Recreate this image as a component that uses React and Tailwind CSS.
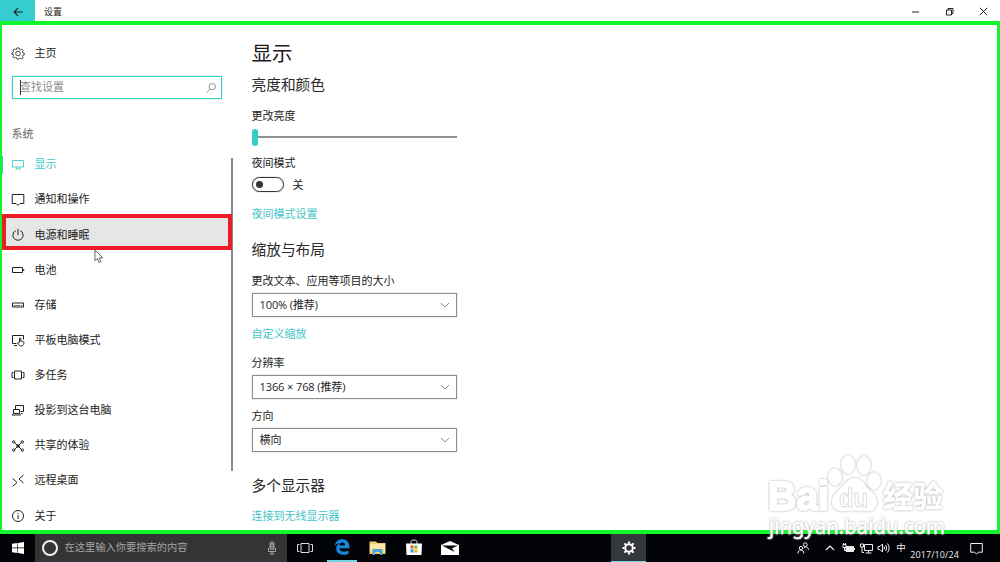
import React from "react";

const Icon = ({ children, className = "w-[14px] h-[14px]", box = "0 0 14 14", w = 1 }) => (
  <svg viewBox={box} className={className} fill="none" stroke="currentColor" strokeWidth={w}>
    {children}
  </svg>
);

const gear =
  "M5.9 1h2.2l.4 1.6 1.1.5 1.5-.9 1.5 1.5-.9 1.5.5 1.1 1.5.3v1.9l-1.5.4-.5 1.1.9 1.5-1.5 1.5-1.5-.9-1.1.5L8.1 13H5.9l-.4-1.4-1.1-.5-1.5.9-1.5-1.5.9-1.5-.5-1.1L.5 8.1V6.4l1.3-.3.5-1.1-.9-1.5 1.5-1.5 1.5.9 1.1-.5z";

const icons = {
  display: (
    <Icon>
      <path d="M1.5 2.5h11v6.5h-11zM5.5 9v2M8.5 9v2M4.5 11h5" strokeWidth=".9" />
    </Icon>
  ),
  notify: (
    <Icon>
      <path d="M1.2 1.5h11.6v9H9l-2 2-2-2H1.2z" />
    </Icon>
  ),
  power: (
    <Icon>
      <path d="M4.7 2.6a5.1 5.1 0 1 0 4.6 0M7 1v6" />
    </Icon>
  ),
  battery: (
    <Icon>
      <path d="M1.5 4.5h10v5h-10zM12.7 6v2" />
    </Icon>
  ),
  storage: (
    <Icon>
      <path d="M1.5 5h11v4h-11z" />
      <path d="M2.5 7.6h6.5M10 7.6h1.5" strokeWidth=".7" />
    </Icon>
  ),
  tablet: (
    <Icon>
      <path d="M5.5 10.5h-4v-8h11v4M3 12.5h3" />
      <path d="M8.5 9.5V5.6c0-1 1.3-1 1.3 0V8l2.4.6c.8.3.8 1 .6 2-.3 1.5-1 2.4-2.5 2.4-1.7 0-2.5-.8-3.8-3 .5-.8 1.3-.6 2-.5z" />
    </Icon>
  ),
  tasks: (
    <Icon>
      <path d="M3.5 3h7v8h-7zM2.5 4.5h-1.5v5h1.5M11.5 4.5H13v5h-1.5" />
    </Icon>
  ),
  project: (
    <Icon>
      <path d="M4.5 6.5v-4h8v6H9.5M2.5 6.5h6v4h-6zM1 12h8.5l-1-1.5M1 12l1.5-1.5M10 10.5h1.5" />
    </Icon>
  ),
  share: (
    <Icon>
      <path d="M3.5 3.5l7 7M10.5 3.5l-7 7" />
      <circle cx="2.7" cy="2.9" r="1.2" />
      <circle cx="11.3" cy="2.9" r="1.2" />
      <circle cx="2.7" cy="11.1" r="1.2" />
      <circle cx="11.3" cy="11.1" r="1.2" />
      <circle cx="7" cy="7" r="1.2" fill="currentColor" />
    </Icon>
  ),
  remote: (
    <Icon>
      <path d="M1.5 4.5l4.5 4-4.5 4M12.5 1L8 5l4.5 4" />
    </Icon>
  ),
  about: (
    <Icon>
      <circle cx="7" cy="7" r="5.5" />
      <path d="M7 6v4M7 4v1" />
    </Icon>
  ),
};

const items = [
  ["display", "显示"],
  ["notify", "通知和操作"],
  ["power", "电源和睡眠"],
  ["battery", "电池"],
  ["storage", "存储"],
  ["tablet", "平板电脑模式"],
  ["tasks", "多任务"],
  ["project", "投影到这台电脑"],
  ["share", "共享的体验"],
  ["remote", "远程桌面"],
  ["about", "关于"],
];

function NavItem({ id, label }) {
  const active = id === "display";
  const hot = id === "power";
  return (
    <div className={`relative flex h-[35.13px] shrink-0 items-center pl-[8.5px] ${active ? "text-[#3fc9c9]" : "text-[#222]"}`}>
      {active && <div className="absolute left-0 top-[9px] h-[18px] w-px bg-[#3fc9c9]" />}
      {hot && <div className="absolute left-0 top-[-3px] h-[36px] w-[230px] border-[4px] border-[#ee1c24] bg-[#e6e6e6]" />}
      <div className="relative flex items-center gap-[10px]">
        {icons[id]}
        <span>{label}</span>
      </div>
    </div>
  );
}

function Select({ children }) {
  return (
    <div className="mt-1 flex h-6 w-[205px] items-center justify-between border border-[#8d8d8d] pl-[7px] pr-[6px] text-[11px] text-[#222] shadow-[0_0_1px_#aaa]">
      <span className="tracking-[-0.1px]">{children}</span>
      <Icon className="h-[10px] w-[10px] text-[#888]" box="0 0 10 10">
        <path d="M1 3l4 4 4-4" />
      </Icon>
    </div>
  );
}

const H2 = ({ children, className }) => (
  <h2 className={`flex h-5 items-center text-[14.7px] leading-5 text-[#2a2a2a] ${className}`}>{children}</h2>
);
const Label = ({ children, className }) => <div className={`h-4 leading-4 ${className}`}>{children}</div>;
const Link = ({ children, className }) => <div className={`h-4 leading-4 text-[#3fc4c8] ${className}`}>{children}</div>;

function TitleBar() {
  return (
    <header className="flex h-[21px] items-center text-[#222]">
      <div className="flex h-full w-[35px] items-center justify-center bg-[#35cdd0]">
        <Icon className="mt-[2px] h-[10px] w-[10px]" box="0 0 10 10" w={1.2}>
          <path d="M10 5H1.2M5 1.2L1.2 5 5 8.8" />
        </Icon>
      </div>
      <span className="ml-[9px] mt-[2px] text-[9px]">设置</span>
      <div className="ml-auto mr-[12px] mt-[2px] flex items-center gap-[25px]">
        <Icon className="h-[9px] w-[9px]" box="0 0 9 9"><path d="M1 5h7" /></Icon>
        <Icon className="h-[9px] w-[9px]" box="0 0 9 9"><path d="M1.5 3h5v5h-5zM3 3V1.5h5v5H6.5" /></Icon>
        <Icon className="h-[9px] w-[9px]" box="0 0 9 9"><path d="M.8 .8l7.4 7.4M8.2 .8L.8 8.2" /></Icon>
      </div>
    </header>
  );
}

function Sidebar() {
  return (
    <nav className="flex w-[231px] shrink-0">
      <div className="flex w-[229px] shrink-0 flex-col">
        <div className="mt-5 flex h-4 items-center gap-[10px] pl-[8.5px] text-[#222]">
          <Icon w={0.9} className="h-[13px] w-[14px]">
            <path d={gear} strokeLinejoin="round" />
            <circle cx="7" cy="7" r="2.5" />
          </Icon>
          <span>主页</span>
        </div>
        <div className="ml-[10px] mt-[15px] flex h-[23px] w-[210px] shrink-0 items-center border border-[#36d2c4] pl-[7px] pr-[4px] text-[#8c8c8c] shadow-[0_0_1px_#36d2c4]">
          <span className="-mr-px h-[15px] w-px bg-[#333]" />
          <span className="flex-1">查找设置</span>
          <Icon className="h-3 w-3" box="0 0 12 12" w={0.9}>
            <circle cx="7.3" cy="4.7" r="3.2" />
            <path d="M5 7L1.5 10.5" />
          </Icon>
        </div>
        <div className="mt-[27px] h-4 shrink-0 pl-[9.5px] leading-4 text-[#666]">系统</div>
        <div className="mt-[5px] flex shrink-0 flex-col">
          {items.map(([id, label]) => (
            <NavItem key={id} id={id} label={label} />
          ))}
        </div>
      </div>
      <div className="mt-[133px] h-[313px] w-[2px] bg-[#8a8a8a]" />
    </nav>
  );
}

function Content() {
  return (
    <main className="flex flex-1 flex-col pl-[18.5px] text-[#222]">
      <h1 className="mt-[14px] h-7 text-[20.5px] leading-7 text-[#1c1c1c]">显示</h1>
      <H2 className="mt-[7px]">亮度和颜色</H2>
      <Label className="mt-[14px]">更改亮度</Label>
      <div className="mt-1 flex h-[18px] w-[205px] items-center">
        <div className="h-[17px] w-[6px] rounded-full bg-[#35cdc8]" />
        <div className="h-[1.5px] flex-1 bg-[#909090]" />
      </div>
      <Label className="mt-[9px]">夜间模式</Label>
      <div className="mt-[6px] flex h-[15px] items-center gap-[9px]">
        <div className="flex h-[15px] w-[32px] items-center rounded-full border border-[#333] pl-[3px] shadow-[0_0_1px_#555]">
          <div className="h-[7px] w-[7px] rounded-full bg-[#333]" />
        </div>
        <span className="mt-px">关</span>
      </div>
      <Link className="mt-[14px]">夜间模式设置</Link>
      <H2 className="mt-[17px]">缩放与布局</H2>
      <Label className="mt-[14px]">更改文本、应用等项目的大小</Label>
      <Select>100% (推荐)</Select>
      <Link className="mt-[9px]">自定义缩放</Link>
      <Label className="mt-[13px]">分辨率</Label>
      <Select>1366 × 768 (推荐)</Select>
      <Label className="mt-[9px]">方向</Label>
      <Select>横向</Select>
      <H2 className="mt-[23px]">多个显示器</H2>
      <Link className="mt-[13px]">连接到无线显示器</Link>
    </main>
  );
}

function Taskbar() {
  return (
    <footer className="flex h-7 items-stretch bg-[#020408] text-white">
      <div className="flex w-[35px] items-center justify-center">
        <svg viewBox="0 0 12 12" className="h-3 w-3" fill="#fff">
          <path d="M0 1.7L5.2 1v4.6H0zM5.8.9L12 0v5.6H5.8zM0 6.2h5.2v4.7L0 10.2zM5.8 6.2H12V12l-6.2-.9z" />
        </svg>
      </div>
      <div className="flex w-[252px] items-center bg-[#333435] pl-[7px] pr-[10px]">
        <div className="h-[16px] w-[16px] rounded-full border-2 border-[#eee]" />
        <span className="ml-[6.5px] flex-1 text-[10.25px] text-[#a5a5a5]">在这里输入你要搜索的内容</span>
        <Icon className="h-[14px] w-[10px] text-[#aaa]" box="0 0 10 14">
          <rect x="3" y="1" width="4" height="7.5" rx="1.5" fill="#777" />
          <path d="M1.5 7v3.5h7V7M5 10.5V13M3 13h4" />
        </Icon>
      </div>
      <div className="flex w-[35px] items-center justify-center">
        <Icon className="h-3 w-4 text-[#ddd]" box="0 0 16 12">
          <path d="M4 1.5h8v9H4zM2.5 2.5h-2v7h2M13.5 2.5h2v7h-2" />
        </Icon>
      </div>
      <div className="ml-[5px] flex w-[30px] items-center justify-center border-b-2 border-[#70d5e5]">
        <svg viewBox="0 0 16 16" className="h-[16px] w-[16px]" fill="#1787e0">
          <path d="M.6 7.1C1.2 2.7 4.3.3 8.2.3c4.6 0 7.2 3.3 7.2 7.2v1.8H5.4c.2 2.5 2.4 3.5 4.9 3.5 1.7 0 3-.5 4.2-1.2v3.1c-1.3.7-3 1.1-5 1.1-4.3 0-7.3-2.4-7.3-6.2 0-2.6 1.5-4.5 3.8-5.6C3 4.4 1.6 5.4.6 7.1zM5.5 6.5h5.6c0-2-1-3-2.7-3-1.6 0-2.7 1.2-2.9 3z" />
        </svg>
      </div>
      <div className="flex w-[41px] items-center justify-center">
        <svg viewBox="0 0 17 14" className="h-[14px] w-[17px]">
          <path d="M.5.5H7L8.5 2h8v11H.5z" fill="#f2cd70" />
          <path d="M1 3h15v7H1z" fill="#fbe6a4" />
          <path d="M3.5 8h10v6H11v-3H6v3H3.500z" fill="#4aa5dc" />
        </svg>
      </div>
      <div className="flex w-[31px] items-center justify-center">
        <svg viewBox="0 0 18 17" className="mb-[2px] h-[17px] w-[18px]">
          <path d="M6 5V2.5Q6 1 9 1t3 1.500V5" fill="none" stroke="#ddd" />
          <path d="M1 4.5h16L16.5 16h-15z" fill="#fff" />
          <path d="M5.5 6.5H8.5v3H5.5z" fill="#e8572a" />
          <path d="M9.3 6.5h3.2v3H9.3z" fill="#7fb832" />
          <path d="M5.5 10.3h3v3.2h-3z" fill="#2a9fe0" />
          <path d="M9.3 10.3h3.2v3.2H9.3z" fill="#f5b81c" />
        </svg>
      </div>
      <div className="flex w-[41px] items-center justify-center">
        <svg viewBox="0 0 18 14" className="h-[14px] w-[18px]">
          <path d="M0 4L9 0l9 4v10H0z" fill="#fff" />
          <path d="M1 4.5h16L11 7.3l2.5 3.7L1 4.500z" fill="#05070a" />
        </svg>
      </div>
      <div className="ml-[141px] flex w-[35px] items-center justify-center border-b border-[#70d5e5] bg-[#34373b]">
        <Icon className="h-[14px] w-[14px]" w={2}>
          <circle cx="7" cy="7" r="3.8" />
          <path d="M7 .5v2M7 11.5v2M.5 7h2M11.5 7h2M2.4 2.4l1.4 1.4M10.2 10.2l1.4 1.4M2.4 11.6l1.4-1.4M10.2 3.8l1.4-1.4" />
        </Icon>
      </div>
      <div className="ml-auto flex items-center pr-[17px] text-[#eee]">
        <Icon className="mr-[16px] h-[12px] w-[12px]" box="0 0 12 12">
          <circle cx="8.3" cy="2.7" r="1.9" />
          <circle cx="4" cy="6" r="1.7" />
          <path d="M1 11.5c0-2.2 1.2-3.5 3-3.5s2.8 1.3 2.8 3.5M6.8 6c2.8-2.3 4.5-.5 4.7 2" />
        </Icon>
        <Icon className="mr-[7px] h-[10px] w-[10px]" box="0 0 10 10" w={1.2}>
          <path d="M1 7l4-4 4 4" />
        </Icon>
        <Icon className="mr-[5px] h-[12px] w-[13px]" box="0 0 13 12">
          <path d="M4 4.5h7.5v5H4z" fill="currentColor" />
          <path d="M12.5 6v2M1 2.5h3v3H1zM2.5 5.5v3H4M1.5 1v1M3.5 1v1" />
        </Icon>
        <Icon className="mr-[4px] h-[12px] w-[13px]" box="0 0 13 12">
          <path d="M4.5 2.5h8v6h-8zM8.5 8.5v2.5M5.5 11h6M.5 2h3v3h-3zM2 5v5.5h2" />
        </Icon>
        <Icon className="mr-[6px] h-[12px] w-[13px]" box="0 0 13 12">
          <path d="M1 4.5h2l2.5-2.5v8L3 7.500H1zM7 4.500q1 1.500 0 3M8.700 3q2 3 0 6M10.500 1.500q3.200 4.500 0 9" />
        </Icon>
        <span className="w-[9px] text-[9.5px]">中</span>
        <span className="ml-[5px] mt-[13px] text-[9px] tracking-[0.1px]">2017/10/24</span>
        <Icon className="ml-[11px] h-[13px] w-[13px]" box="0 0 13 13">
          <path d="M.7 1.5h11.6v8.7h-4l-1.8 2-1.8-2h-4z" />
        </Icon>
      </div>
    </footer>
  );
}

function Watermark() {
  return (
    <svg viewBox="0 0 190 95" className="pointer-events-none absolute left-[762px] top-[450px] h-[95px] w-[190px] [filter:drop-shadow(0_0_0.8px_#aaa)]" fill="#fff" stroke="#fff" strokeLinejoin="round">
      <text x="6" y="60" fontFamily="Liberation Sans" fontWeight="700" fontSize="40" strokeWidth="2.2" textLength="61" lengthAdjust="spacingAndGlyphs">Bai</text>
      <ellipse cx="73" cy="27" rx="6.5" ry="8.3" />
      <ellipse cx="86" cy="14.5" rx="6.4" ry="9" />
      <ellipse cx="102" cy="15.5" rx="6.4" ry="9" />
      <ellipse cx="112" cy="31" rx="6.4" ry="8.3" />
      <path d="M92.5 28.5c5 0 8 3 11 7.5 4 5.5 11 8 11 16 0 6-4 9-9.5 9-4.5 0-8-1-12.5-1s-8 1-12.5 1c-5.5 0-9.500-3-9.500-9 0-8 6-10.500 10.500-16 3.500-4.500 6.500-7.500 11.500-7.500z" />
      <text x="77" y="57" fontFamily="Liberation Sans" fontWeight="700" fontSize="25" stroke="#dcdcdc" strokeWidth="1" textLength="29" lengthAdjust="spacingAndGlyphs">du</text>
      <text x="121" y="57" fontFamily="Noto Sans CJK SC" fontWeight="700" fontSize="30" strokeWidth=".6">经验</text>
      <text x="7" y="84" fontFamily="Noto Sans" fontSize="21" strokeWidth=".3" textLength="176" lengthAdjust="spacingAndGlyphs">jingyan.baidu.com</text>
    </svg>
  );
}

export default function App() {
  return (
    <div className="relative flex h-[562px] w-[1000px] flex-col overflow-hidden bg-white font-['Open_Sans','Noto_Sans_CJK_SC',sans-serif] text-[11px]">
      <TitleBar />
      <div className="flex h-[513px] shrink-0 overflow-hidden border-b-[4px] border-l-2 border-r-[3px] border-t-[4px] border-[#12f52c]">
        <Sidebar />
        <Content />
      </div>
      <Taskbar />
      <svg viewBox="0 0 12 16" className="absolute left-[94px] top-[249px] h-[15px] w-[11px]" fill="#fff" stroke="#555" strokeWidth="1">
        <path d="M1 1v11.5l2.7-2.3 1.7 4.3 2-.9-1.7-4.1h4z" />
      </svg>
      <Watermark />
    </div>
  );
}
